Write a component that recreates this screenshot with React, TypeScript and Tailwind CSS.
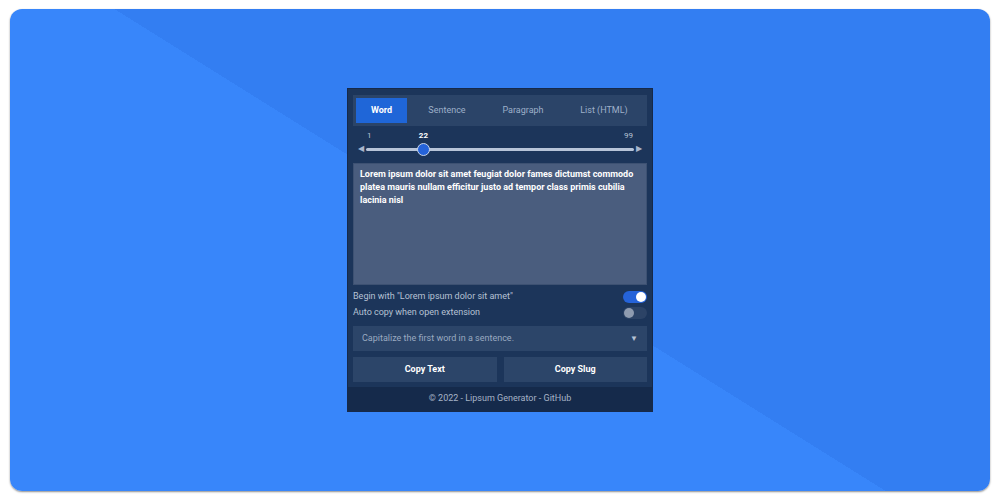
import React, { useState } from 'react';

const TABS = [
  { label: 'Word', cls: 'w-[51px]' },
  { label: 'Sentence', cls: 'w-[64px] ml-[8px]' },
  { label: 'Paragraph', cls: 'w-[70px] ml-[9px]' },
  { label: 'List (HTML)', cls: 'w-[72px] ml-[10px]' },
];

const Toggle: React.FC<{ on: boolean; onChange: () => void }> = ({ on, onChange }) => (
  <button
    onClick={onChange}
    className={`relative w-[24px] h-[12px] rounded-full ${on ? 'bg-[#2563d9]' : 'bg-[#2c4366]'}`}
  >
    <span
      className={`absolute top-[1px] w-[10px] h-[10px] rounded-full ${on ? 'right-[1px] bg-white' : 'left-[1px] bg-[#8e9bb0]'}`}
    />
  </button>
);

export default function App() {
  const [tab, setTab] = useState(0);
  const [count] = useState(22);
  const [beginLorem, setBeginLorem] = useState(true);
  const [autoCopy, setAutoCopy] = useState(false);

  const pct = ((count - 1) / (99 - 1)) * 100;

  return (
    <div className="w-[1000px] h-[500px] bg-white pt-[9px] pb-[9px] px-[10px]" style={{ fontFamily: 'Roboto, "Liberation Sans", sans-serif' }}>
      <div className="h-full rounded-[12px] shadow-[0_1px_2px_rgba(0,0,0,0.45)] bg-[linear-gradient(32deg,#3886fa_50%,#337ef2_50%)] flex items-center justify-center">
        {/* Popup */}
        <div className="w-[306px] h-[324px] bg-[#1c355a] border border-[#16294a] flex flex-col">
          <div className="px-[5px] pt-[6px] flex flex-col">
            {/* Tabs */}
            <div className="h-[31px] bg-[#2b4468] p-[3px] flex">
              {TABS.map((t, i) => (
                <button
                  key={t.label}
                  onClick={() => setTab(i)}
                  className={`h-full text-[9px] ${t.cls} ${i === tab ? 'bg-[#1f66d8] text-white font-bold' : 'text-[#9eb0c8]'}`}
                >
                  {t.label}
                </button>
              ))}
            </div>

            {/* Slider */}
            <div className="h-[37px] relative flex items-center px-[5px]">
              <span className="text-[#a8b6cc] text-[8px] leading-none mt-[9px]">◀</span>
              <div className="flex-1 relative mx-[2px] mt-[9px]">
                <div className="h-[3px] rounded-full bg-[#b7c4d8]" />
                <div
                  className="absolute top-[-5px] w-[13px] h-[13px] -ml-[6px] rounded-full bg-[#2563d9] border-[1.5px] border-[#c9d6ea]"
                  style={{ left: `${pct}%` }}
                />
                <span className="absolute left-[1px] top-[-16px] text-[8px] text-[#b8c4d6] leading-none">1</span>
                <span
                  className="absolute top-[-16px] -translate-x-1/2 text-[8px] font-bold text-white leading-none"
                  style={{ left: `${pct}%` }}
                >
                  {count}
                </span>
                <span className="absolute right-[1px] top-[-16px] text-[8px] text-[#b8c4d6] leading-none">99</span>
              </div>
              <span className="text-[#a8b6cc] text-[8px] leading-none mt-[9px]">▶</span>
            </div>

            {/* Output */}
            <div className="h-[122px] bg-[#4a5d7e] border border-[#3d5172] px-[6px] py-[4px] text-[9px] leading-[13px] font-bold text-white">
              Lorem ipsum dolor sit amet feugiat dolor fames dictumst commodo platea mauris nullam efficitur justo ad tempor class primis cubilia lacinia nisl
            </div>

            {/* Options */}
            <div className="mt-[6px] flex items-center justify-between h-[12px]">
              <span className="text-[9px] text-[#b6c2d4]">Begin with "Lorem ipsum dolor sit amet"</span>
              <Toggle on={beginLorem} onChange={() => setBeginLorem(!beginLorem)} />
            </div>
            <div className="mt-[4px] flex items-center justify-between h-[12px]">
              <span className="text-[9px] text-[#b6c2d4]">Auto copy when open extension</span>
              <Toggle on={autoCopy} onChange={() => setAutoCopy(!autoCopy)} />
            </div>

            <div className="mt-[7px] h-[25px] bg-[#2c4569] flex items-center justify-between px-[9px]">
              <span className="text-[9px] text-[#9aaac0]">Capitalize the first word in a sentence.</span>
              <span className="text-[8px] text-[#b6c2d4]">▼</span>
            </div>

            <div className="mt-[6px] grid grid-cols-2 gap-[7px]">
              <button className="h-[25px] bg-[#2c4569] text-[9px] font-bold text-white">Copy Text</button>
              <button className="h-[25px] bg-[#2c4569] text-[9px] font-bold text-white">Copy Slug</button>
            </div>
          </div>

          {/* Footer */}
          <div className="mt-auto h-[24px] bg-[#152a4b] flex items-center justify-center text-[9px] text-[#a6b3c6]">
            © 2022 - Lipsum Generator - GitHub
          </div>
        </div>
      </div>
    </div>
  );
}
